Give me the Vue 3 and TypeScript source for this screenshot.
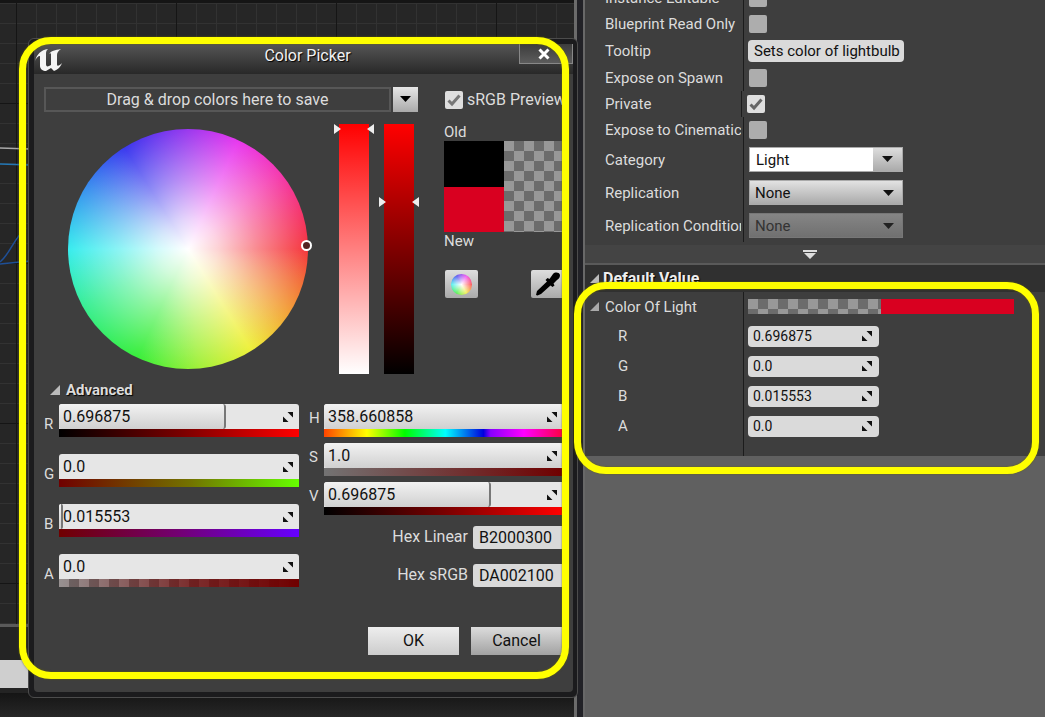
<script setup lang="ts">
import { ref, reactive } from 'vue'

interface Channel {
  key: string
  value: string
  fill: number
}

const rgba = reactive<Channel[]>([
  { key: 'R', value: '0.696875', fill: 69.5 },
  { key: 'G', value: '0.0', fill: 0 },
  { key: 'B', value: '0.015553', fill: 1.6 },
  { key: 'A', value: '0.0', fill: 0 },
])

const hsv = reactive<Channel[]>([
  { key: 'H', value: '358.660858', fill: 100 },
  { key: 'S', value: '1.0', fill: 100 },
  { key: 'V', value: '0.696875', fill: 70 },
])

const hex = reactive([
  { label: 'Hex Linear', value: 'B2000300' },
  { label: 'Hex sRGB', value: 'DA002100' },
])

const srgbPreview = ref(true)

const flags = reactive([
  { label: 'Instance Editable', on: false },
  { label: 'Blueprint Read Only', on: false },
])
const exposure = reactive([
  { label: 'Expose on Spawn', on: false },
  { label: 'Private', on: true },
  { label: 'Expose to Cinematics', on: false },
])
const tooltip = ref('Sets color of lightbulb')
const category = ref('Light')
</script>

<template>
  <div class="editor">
    <main class="graph">
      <div class="grid">
        <svg class="wires" viewBox="0 0 30 160" width="30" height="160" aria-hidden="true">
          <path d="M0 8 L30 9" stroke="#a9a9a9" stroke-width="1.5" />
          <path d="M0 24 L30 25" stroke="#2277b5" stroke-width="1.5" />
          <path d="M0 122 C10 114 14 98 26 88 M0 124 L30 121" stroke="#1f4f96" stroke-width="1.5" fill="none" />
        </svg>
      </div>
      <div class="output"><div class="output-box"></div></div>
      <div class="status"></div>

      <section class="dialog" aria-label="Color Picker">
        <header class="titlebar">
          <svg class="logo" viewBox="0 0 28 24" width="28" height="24" aria-hidden="true">
            <path fill="#f4f4f4" d="M0 13 C2 6 6 2 13 1 C11 3 11 4 11 6 V16 C11 18 12 19 14 18 L16 17 V6 C16 5 15 5 14 6 C16 3 20 2 26 1 C23 3 22 5 22 7 V16 C22 19 24 18 27 15 C25 20 22 22 19 23 L16 20 L11 23 C8 23 5 21 5 18 V8 C3 8 1 10 0 13 Z" />
          </svg>
          <h1>Color Picker</h1>
          <button class="close" type="button" aria-label="Close">
            <svg viewBox="0 0 12 12" width="12" height="12"><path d="M1.500 1.500 L10.500 10.500 M10.500 1.500 L1.500 10.500" stroke="#fff" stroke-width="3" /></svg>
          </button>
        </header>

        <div class="content">
          <div class="top">
            <div class="picker">
              <div class="theme">
                <div class="drop">Drag &amp; drop colors here to save</div>
                <button class="theme-btn" type="button" aria-label="Color themes">
                  <svg viewBox="0 0 11 7" width="11" height="7"><path d="M0 0 H11 L5.500 6 Z" fill="#000" /></svg>
                </button>
              </div>
              <div class="spectrum">
                <div class="wheel"><span class="pin"></span></div>
                <div class="bar sat">
                  <svg class="marks at-top" viewBox="0 0 42 12" width="42" height="12"><path d="M1 1 L8 6 L1 11 Z M41 1 L34 6 L41 11 Z" fill="#eee" /></svg>
                </div>
                <div class="bar val">
                  <svg class="marks at-value" viewBox="0 0 42 12" width="42" height="12"><path d="M1 1 L8 6 L1 11 Z M41 1 L34 6 L41 11 Z" fill="#eee" /></svg>
                </div>
              </div>
            </div>

            <div class="preview">
              <label class="srgb">
                <span class="tick">
                  <input v-model="srgbPreview" type="checkbox" />
                  <svg v-if="srgbPreview" viewBox="0 0 18 18" width="18" height="18"><path d="M3.500 9.500 L7 13 L14.500 4.500" fill="none" stroke="#777" stroke-width="3" /></svg>
                </span>
                sRGB Preview
              </label>
              <div class="caption">Old</div>
              <div class="compare">
                <div class="solid"><span class="old"></span><span class="new"></span></div>
                <div class="checker"></div>
              </div>
              <div class="caption">New</div>
              <div class="tools">
                <button class="tool" type="button" aria-label="Color wheel"><span class="mini-wheel"></span></button>
                <button class="tool" type="button" aria-label="Eye dropper">
                  <svg viewBox="0 0 26 24" width="26" height="24"><path fill="#000" d="M1 23 L2 19 L12 9.500 L10.500 8 L12.500 6 L14.500 7 L18 2 C20 0 24 0 25 3 C25 5 24 7 22 8 L18.500 11.500 L19.500 13.500 L17.500 15 L15.500 13.500 L6 22 L2.500 23.500 Z" /></svg>
                </button>
              </div>
            </div>
          </div>

          <h2 class="advanced">
            <svg viewBox="0 0 10 10" width="10" height="10"><path d="M10 0 V10 H0 Z" fill="#bbb" /></svg>
            Advanced
          </h2>

          <div class="channels">
            <div class="rgba">
              <div v-for="c in rgba" :key="c.key" class="channel">
                <label :for="'ch-' + c.key">{{ c.key }}</label>
                <div class="slider">
                  <div class="spin">
                    <span v-if="c.fill > 0" class="fill" :style="{ width: c.fill + '%' }"></span>
                    <input :id="'ch-' + c.key" v-model="c.value" type="text" />
                    <svg class="drag" viewBox="0 0 12 12" width="12" height="12"><path d="M5.500 1 H11 V6.500 Z M1 5.500 V11 H6.500 Z" fill="#111" /></svg>
                  </div>
                  <div class="ramp" :class="'ramp-' + c.key"></div>
                </div>
              </div>
            </div>
            <div class="hsv">
              <div v-for="c in hsv" :key="c.key" class="channel">
                <label :for="'ch-' + c.key">{{ c.key }}</label>
                <div class="slider">
                  <div class="spin">
                    <span class="fill" :class="{ full: c.fill === 100 }" :style="{ width: c.fill + '%' }"></span>
                    <input :id="'ch-' + c.key" v-model="c.value" type="text" />
                    <svg class="drag" viewBox="0 0 12 12" width="12" height="12"><path d="M5.500 1 H11 V6.500 Z M1 5.500 V11 H6.500 Z" fill="#111" /></svg>
                  </div>
                  <div class="ramp" :class="'ramp-' + c.key"></div>
                </div>
              </div>
              <label v-for="h in hex" :key="h.label" class="hex">
                {{ h.label }}
                <input v-model="h.value" type="text" />
              </label>
            </div>
          </div>

          <footer class="actions">
            <button class="ok" type="button">OK</button>
            <button type="button">Cancel</button>
          </footer>
        </div>
        <div class="callout dialog-callout"></div>
      </section>
    </main>

    <aside class="details">
      <div class="variable">
        <label v-for="f in flags" :key="f.label" class="row">
          <span class="name">{{ f.label }}</span>
          <span class="cell"><span class="tick"><input v-model="f.on" type="checkbox" /></span></span>
        </label>
        <label class="row tall">
          <span class="name">Tooltip</span>
          <span class="cell narrow"><input v-model="tooltip" class="text" type="text" /></span>
        </label>
        <label v-for="f in exposure" :key="f.label" class="row" :class="{ shifted: f.on }">
          <span class="name">{{ f.label }}</span>
          <span class="cell">
            <span class="tick">
              <input v-model="f.on" type="checkbox" />
              <svg v-if="f.on" viewBox="0 0 18 18" width="18" height="18"><path d="M3.500 9.500 L7 13 L14.500 4.500" fill="none" stroke="#666" stroke-width="3" /></svg>
            </span>
          </span>
        </label>
        <div class="row combo-row">
          <label class="name" for="category">Category</label>
          <span class="cell">
            <span class="combo">
              <input id="category" v-model="category" type="text" />
              <button type="button" aria-label="Category options"><svg viewBox="0 0 11 7" width="11" height="7"><path d="M0 0 H11 L5.500 6 Z" fill="#111" /></svg></button>
            </span>
          </span>
        </div>
        <div class="row combo-row">
          <label class="name" for="replication">Replication</label>
          <span class="cell">
            <span class="combo">
              <select id="replication"><option>None</option></select>
              <svg class="arrow" viewBox="0 0 11 7" width="11" height="7"><path d="M0 0 H11 L5.500 6 Z" fill="#111" /></svg>
            </span>
          </span>
        </div>
        <div class="row combo-row">
          <label class="name" for="condition">Replication Condition</label>
          <span class="cell">
            <span class="combo disabled">
              <select id="condition" disabled><option>None</option></select>
              <svg class="arrow" viewBox="0 0 11 7" width="11" height="7"><path d="M0 0 H11 L5.500 6 Z" fill="#222" /></svg>
            </span>
          </span>
        </div>
      </div>
      <button class="expander" type="button" aria-label="Show advanced">
        <svg viewBox="0 0 14 9" width="14" height="9"><path d="M0 0 H14 V2 H0 Z M1 3 H13 L7 9 Z" fill="#ddd" /></svg>
      </button>

      <section class="defaults">
        <h2>
          <svg viewBox="0 0 9 9" width="9" height="9"><path d="M9 0 V9 H0 Z" fill="#bbb" /></svg>
          Default Value
        </h2>
        <div class="values">
          <div class="row color-row">
            <span class="name parent">
              <svg viewBox="0 0 9 9" width="9" height="9"><path d="M9 0 V9 H0 Z" fill="#aaa" /></svg>
              Color Of Light
            </span>
            <span class="cell narrow"><span class="swatch"><span class="checker"></span><span class="red"></span></span></span>
          </div>
          <label v-for="c in rgba" :key="c.key" class="row number-row">
            <span class="name child">{{ c.key }}</span>
            <span class="cell narrow">
              <span class="number">
                <input v-model="c.value" type="text" />
                <svg class="drag" viewBox="0 0 12 12" width="12" height="12"><path d="M5.500 1 H11 V6.500 Z M1 5.500 V11 H6.500 Z" fill="#111" /></svg>
              </span>
            </span>
          </label>
        </div>
        <div class="callout value-callout"></div>
      </section>
    </aside>
  </div>
</template>

<style>
body {
  background: #606060;
}
</style>

<style scoped>
* {
  box-sizing: border-box;
}
.editor {
  display: flex;
  min-height: 100vh;
  overflow: hidden;
  font-family: Roboto, "Liberation Sans", sans-serif;
  font-size: 16px;
  line-height: 18px;
  color: #dcdcdc;
}
button,
input,
select {
  margin: 0;
  padding: 0;
  border: 0;
  font: inherit;
  color: #111;
}
svg {
  display: block;
  flex: none;
}
h1,
h2 {
  margin: 0;
  font-size: 16px;
}

/* Graph editor behind the dialog */
.graph {
  position: relative;
  display: flex;
  flex-direction: column;
  flex: 0 0 583px;
  padding-right: 9px;
  background: linear-gradient(90deg, transparent 574px, #6b6b6b 574px 577px, #222227 577px);
  background-color: #1d1d1d;
}
.grid {
  flex: 1;
  border-top: 3px solid #151515;
  background-color: #262626;
  background-image:
    linear-gradient(90deg, #151515 1px, transparent 1px),
    linear-gradient(#151515 1px, transparent 1px),
    linear-gradient(90deg, #323232 1px, transparent 1px),
    linear-gradient(#323232 1px, transparent 1px);
  background-size: 160px 160px, 160px 160px, 20px 20px, 20px 20px;
  background-position: 16px 0, 0 100px, 16px 0, 0 0;
}
.wires {
  margin-top: 137px;
}
.output {
  height: 69px;
  padding-top: 33px;
  border-top: 3px solid #5a5a5a;
  background: #242424;
}
.output-box {
  width: 60px;
  height: 28px;
  background: #cfcfcf;
}
.status {
  height: 24px;
  background: linear-gradient(#151515, #272727);
}

/* Color picker window */
.dialog {
  position: absolute;
  top: 38px;
  left: 28px;
  width: 550px;
  padding: 5px 4px 5px 5px;
  border: 1px solid #4c4c4c;
  border-radius: 6px;
  background: #1b1b1d;
}
.titlebar {
  display: flex;
  justify-content: space-between;
  height: 30px;
  background: linear-gradient(#555, #282828);
}
.titlebar h1 {
  padding-top: 3px;
  font-weight: 400;
  white-space: nowrap;
  color: #f2f2f2;
  text-shadow: 1px 1px 1px #000;
}
.logo {
  margin: 4px 33px 0 1px;
}
.close {
  display: grid;
  place-items: center;
  width: 54px;
  height: 20px;
  padding-right: 4px;
  border: 1px solid #888;
  border-top: 0;
  background: linear-gradient(#3c3c3c, #5c5c5c);
}
.content {
  padding: 13px 11px 37px 10px;
  border-radius: 0 0 4px 4px;
  background: #3e3e3e;
}
.top {
  display: flex;
  gap: 26px;
}
.picker {
  width: 374px;
}
.theme {
  display: flex;
  gap: 2px;
}
.drop {
  flex: 1;
  height: 25px;
  border: 2px solid #575757;
  text-align: center;
  line-height: 21px;
}
.theme-btn {
  display: grid;
  place-items: center;
  width: 25px;
  height: 25px;
  background: linear-gradient(#e6e6e6, #aaa);
}
.spectrum {
  display: flex;
  align-items: center;
  gap: 15px;
  height: 250px;
  margin-top: 12px;
  padding-left: 24px;
}
.wheel {
  position: relative;
  width: 240px;
  height: 240px;
  margin-right: 16px;
  border-radius: 50%;
  background:
    radial-gradient(closest-side, #fff 0, rgba(255, 255, 255, 0.78) 25%, rgba(255, 255, 255, 0.42) 58%, rgba(255, 255, 255, 0) 100%),
    conic-gradient(from 90deg, #f5353c, #f26a38 15deg, #f2a038 32deg, #eef03a 58deg, #a0f038 85deg, #38ee3a 115deg, #38ee90 150deg, #38ecee 180deg, #3892ee 210deg, #3a38ee 238deg, #9438ee 268deg, #e838ee 295deg, #f538b0 320deg, #f5356c 342deg, #f5353c);
}
.pin {
  position: absolute;
  top: 111px;
  right: -4px;
  width: 11px;
  height: 11px;
  border: 2px solid #fff;
  border-radius: 50%;
  background: #522;
}
.bar {
  position: relative;
  width: 30px;
  height: 250px;
}
.sat {
  background: linear-gradient(#f00, #fff);
}
.val {
  background: linear-gradient(#f00, #000);
}
.marks {
  position: absolute;
  left: -6px;
}
.at-top {
  top: -1px;
}
.at-value {
  top: 72px;
}
.preview {
  flex: 1;
  min-width: 0;
  overflow: hidden;
}
.srgb {
  display: flex;
  gap: 4px;
  align-items: center;
  height: 25px;
  padding-left: 1px;
  white-space: nowrap;
}
.tick {
  display: grid;
  flex: none;
}
.tick > * {
  grid-area: 1 / 1;
}
.tick input {
  appearance: none;
  width: 18px;
  height: 18px;
  border-radius: 2px;
  background: #adadad;
}
.tick input:checked {
  background: #dedede;
}
.caption {
  font-size: 15px;
}
.srgb + .caption {
  margin-top: 11px;
}
.compare {
  display: flex;
  height: 91px;
}
.solid {
  display: grid;
  width: 60px;
}
.old {
  background: #000;
}
.new,
.red {
  background: #d90020;
}
.checker {
  flex: 1;
  background: repeating-conic-gradient(#6c6c6c 0 25%, #989898 0 50%) 0 0 / 20px 20px;
}
.tools {
  display: flex;
  gap: 53px;
  margin-top: 20px;
  padding-left: 1px;
}
.tool {
  display: grid;
  flex: none;
  place-items: center;
  width: 33px;
  height: 28px;
  border-radius: 2px;
  background: linear-gradient(#dedede, #aaa);
}
.mini-wheel {
  width: 21px;
  height: 21px;
  border-radius: 50%;
  background:
    radial-gradient(closest-side, #fff 0, rgba(255, 255, 255, 0.1) 100%),
    conic-gradient(from 90deg, #f44, #ee4 60deg, #4e4 120deg, #4ee 180deg, #44e 240deg, #e4e 300deg, #f44);
}
.advanced {
  display: flex;
  align-items: center;
  gap: 6px;
  margin-top: 7px;
  padding-left: 6px;
  font-size: 15px;
  text-shadow: 1px 1px 1px #000;
}
.channels {
  display: flex;
  gap: 10px;
  margin-top: 5px;
}
.rgba {
  display: flex;
  flex-direction: column;
  gap: 17px;
  width: 255px;
}
.hsv {
  display: flex;
  flex: 1;
  flex-direction: column;
  gap: 6px;
  min-width: 0;
}
.channel {
  display: flex;
}
.channel label {
  width: 15px;
  padding-top: 11px;
  font-size: 15px;
}
.hsv .channel label {
  padding-top: 5px;
}
.slider {
  flex: 1;
  min-width: 0;
}
.spin,
.number {
  position: relative;
  display: flex;
  align-items: center;
  height: 25px;
  padding: 0 5px 0 4px;
  border-radius: 3px 3px 0 0;
  background: #e6e6e6;
}
.hsv .spin {
  padding-right: 4px;
  border-top-right-radius: 0;
}
.spin input,
.number input {
  position: relative;
  flex: 1;
  min-width: 0;
  background: none;
}
.fill {
  position: absolute;
  inset: 0 auto 0 0;
  border-right: 2px solid #777;
  border-radius: 3px;
  background: linear-gradient(#f2f2f2, #d0d0d0);
}
.full {
  border-right: 0;
}
.drag {
  position: relative;
}
.ramp {
  height: 8px;
}
.ramp-R,
.ramp-V {
  background: linear-gradient(90deg, #000, #700 50%, #f00);
}
.ramp-G {
  background: linear-gradient(90deg, #700000, #737300 55%, #6f0);
}
.ramp-B {
  background: linear-gradient(90deg, #700000, #730073 50%, #60f);
}
.ramp-A {
  background:
    linear-gradient(90deg, rgba(112, 0, 0, 0.05), rgba(112, 0, 0, 0.7) 55%, #700000),
    repeating-linear-gradient(90deg, #999 0 10px, #6c6c6c 10px 20px);
}
.ramp-H {
  background: linear-gradient(90deg, #f40, #ff0 18%, #0f0 34%, #0ff 51%, #00d 67%, #80f 70%, #f0f 84%, #f04);
}
.ramp-S {
  background: linear-gradient(90deg, #737373, #700000);
}
.hex {
  display: flex;
  align-items: center;
  justify-content: flex-end;
  gap: 5px;
  height: 32px;
}
.hex input {
  width: 89px;
  height: 23px;
  padding-left: 6px;
  border-radius: 3px 0 0 3px;
  background: #d9d9d9;
}
.actions {
  display: flex;
  justify-content: flex-end;
  gap: 12px;
  margin-top: 36px;
}
.actions button {
  width: 91px;
  height: 28px;
  background: linear-gradient(#dcdcdc, #a2a2a2);
}
.actions .ok {
  background: linear-gradient(#eee, #ccc);
}

/* Highlight outlines */
.callout {
  position: absolute;
  border: 7px solid #ff0;
  border-radius: 32px;
  box-shadow: 0 0 2px #660, inset 0 0 2px #660;
  pointer-events: none;
}
.dialog-callout {
  inset: -2px 8px 18px -10px;
}
.value-callout {
  inset: 17px 6px -18px -11px;
}

/* Details panel */
.details {
  flex: 1;
  min-width: 0;
  border-left: 2px solid #686868;
  background: #606060;
  font-size: 15px;
}
.variable {
  margin-top: -15px;
  padding-bottom: 3px;
  background: #3e3e3e;
}
.row {
  display: grid;
  grid-template-columns: 158px 1fr;
  align-items: center;
  height: 26px;
}
.shifted {
  grid-template-columns: 156px 1fr;
}
.tall {
  height: 28px;
}
.combo-row {
  height: 33px;
}
.name {
  margin-right: 2px;
  padding-left: 20px;
  overflow: hidden;
  white-space: nowrap;
}
.cell {
  display: flex;
  align-items: center;
  height: 100%;
  padding-left: 5px;
  border-left: 1px solid #1c1c1c;
}
.narrow {
  padding-left: 4px;
}
.text {
  width: 156px;
  height: 22px;
  padding-left: 6px;
  border-radius: 4px;
  background: #dadada;
}
.combo {
  position: relative;
  display: flex;
  width: 154px;
  height: 25px;
  border: 1px solid #aaa;
  background: linear-gradient(#e2e2e2, #aaa);
}
.combo input {
  flex: 1;
  min-width: 0;
  padding-left: 6px;
  background: #fff;
}
.combo button {
  width: 29px;
  padding-left: 9px;
  background: linear-gradient(#ddd, #aaa);
}
.combo select {
  appearance: none;
  flex: 1;
  padding-left: 5px;
  background: none;
}
.arrow {
  position: absolute;
  top: 9px;
  right: 8px;
}
.disabled {
  border-color: #777;
  background: linear-gradient(#858585, #707070);
}
.disabled select {
  color: #333;
  opacity: 1;
}
.expander {
  display: grid;
  place-items: center;
  width: 100%;
  height: 20px;
  padding-right: 10px;
  border-bottom: 2px solid #5a5a5a;
  background: #444;
}
.defaults {
  position: relative;
}
.defaults h2 {
  display: flex;
  align-items: center;
  gap: 4px;
  height: 27px;
  padding-left: 5px;
  background: #303030;
  color: #eee;
  text-shadow: 1px 1px 1px #000;
}
.values {
  padding-bottom: 15px;
  background: linear-gradient(90deg, #3e3e3e 158px, #1c1c1c 158px 159px, #3e3e3e 159px);
}
.color-row {
  height: 29px;
}
.number-row {
  height: 30px;
}
.parent {
  display: flex;
  align-items: center;
  gap: 6px;
  padding-left: 5px;
}
.child {
  padding-left: 33px;
}
.swatch {
  display: flex;
  flex: 0 1 266px;
  height: 15px;
}
.red {
  flex: 1;
}
.number {
  width: 131px;
  height: 21px;
  padding: 0 6px 0 5px;
  border-radius: 4px;
  background: #dadada;
  font-size: 14px;
}
</style>
